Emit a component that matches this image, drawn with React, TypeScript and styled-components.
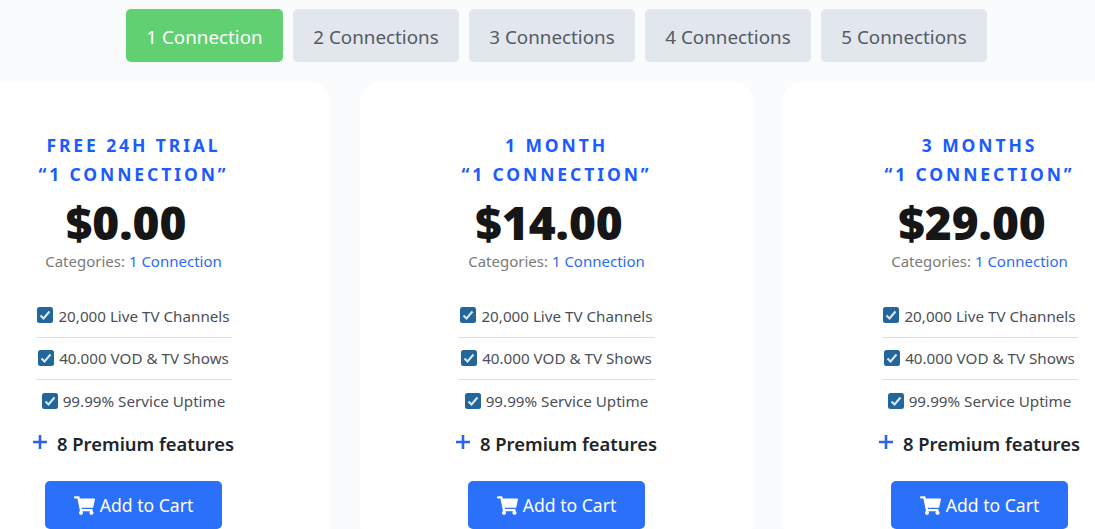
import React from 'react';
import styled, { createGlobalStyle } from 'styled-components';

const GlobalStyle = createGlobalStyle`
    html, body {
        margin: 0;
        padding: 0;
        height: 529px;
        overflow: hidden;
        background: #f9fbfd;
        font-family: "Noto Sans", "Open Sans", sans-serif;
    }
`;

const Page = styled.div`
    width: 1095px;
    height: 529px;
    overflow: hidden;
`;

const TabBar = styled.div`
    display: flex;
    justify-content: center;
    gap: 10px;
    height: 82px;
    padding: 9px 0 0 18px;
    box-sizing: border-box;
`;

const Tab = styled.div<{ $active?: boolean }>`
    display: flex;
    align-items: center;
    justify-content: center;
    height: 53px;
    width: ${props => (props.$active ? '157px' : '166px')};
    border-radius: 5px;
    font-size: 18.8px;
    padding-top: 2px;
    box-sizing: border-box;
    background: ${props => (props.$active ? '#60d071' : '#e1e7ed')};
    color: ${props => (props.$active ? '#ffffff' : '#555a64')};
`;

const CardRow = styled.div`
    display: flex;
    gap: 30px;
    margin-left: -63px;
`;

const Card = styled.div`
    flex: 0 0 393px;
    height: 460px;
    box-sizing: border-box;
    padding-top: 49px;
    background: #ffffff;
    border-radius: 20px;
    display: flex;
    flex-direction: column;
    align-items: center;
`;

const Title = styled.div`
    font-size: 17.5px;
    line-height: 29px;
    font-weight: 700;
    letter-spacing: 2.9px;
    color: #1a5cff;
    text-align: center;
`;

const Price = styled.div`
    font-size: 46px;
    line-height: 48px;
    margin-top: 9px;
    font-weight: 900;
    color: #161616;
    padding-right: 15px;
`;

const Categories = styled.div`
    font-size: 15px;
    line-height: 20px;
    color: #7a7a7a;
    margin-top: 5px;
`;

const CategoryLink = styled.span`
    color: #2b6cf6;
`;

const FeatureList = styled.div`
    width: 196px;
    margin-top: 24px;
`;

const Feature = styled.div`
    display: flex;
    align-items: center;
    justify-content: center;
    gap: 5px;
    height: 42.5px;
    box-sizing: border-box;
    font-size: 15.2px;
    white-space: nowrap;
    color: #4a4f58;
    border-bottom: 1px solid #dedfe1;

    &:last-child {
        border-bottom: none;
    }
`;

const CheckBox = styled.svg`
    flex: none;
    width: 16px;
    height: 16px;
    margin-top: -1px;
`;

const PremiumRow = styled.div`
    display: flex;
    align-items: center;
    gap: 10px;
    margin-top: 4.5px;
    height: 32px;
    font-size: 18.4px;
    font-weight: 600;
    white-space: nowrap;
    color: #212529;
`;

const PlusIcon = styled.svg`
    width: 14px;
    height: 14px;
    margin-top: -2px;
`;

const CartButton = styled.div`
    display: flex;
    align-items: center;
    justify-content: center;
    gap: 5px;
    width: 177px;
    height: 48px;
    margin-top: 22px;
    border-radius: 5px;
    background: #2b70fb;
    color: #ffffff;
    font-size: 17.6px;
`;

const CartIcon = styled.svg`
    width: 21px;
    height: 19px;
    fill: #ffffff;
`;

const tabs = ['1 Connection', '2 Connections', '3 Connections', '4 Connections', '5 Connections'];

const plans = [
    { title: 'FREE 24H TRIAL', price: '$0.00' },
    { title: '1 MONTH', price: '$14.00' },
    { title: '3 MONTHS', price: '$29.00' },
];

const features = ['20,000 Live TV Channels', '40.000 VOD & TV Shows', '99.99% Service Uptime'];

const App: React.FC = () => (
    <Page>
        <GlobalStyle />
        <TabBar>
            {tabs.map((tab, i) => (
                <Tab key={tab} $active={i === 0}>{tab}</Tab>
            ))}
        </TabBar>
        <CardRow>
            {plans.map(plan => (
                <Card key={plan.title}>
                    <Title>{plan.title}<br />“1 CONNECTION”</Title>
                    <Price>{plan.price}</Price>
                    <Categories>
                        Categories: <CategoryLink>1 Connection</CategoryLink>
                    </Categories>
                    <FeatureList>
                        {features.map(feature => (
                            <Feature key={feature}>
                                <CheckBox viewBox="0 0 16 16">
                                    <rect width="16" height="16" rx="2.5" fill="#22669c" />
                                    <path d="M3.5 8.5l3 3 6-7" fill="none" stroke="#dcebf7" strokeWidth="2" />
                                </CheckBox>
                                {feature}
                            </Feature>
                        ))}
                    </FeatureList>
                    <PremiumRow>
                        <PlusIcon viewBox="0 0 14 14">
                            <path d="M7 0v14M0 7h14" stroke="#2b63f0" strokeWidth="2.6" />
                        </PlusIcon>
                        8 Premium features
                    </PremiumRow>
                    <CartButton>
                        <CartIcon viewBox="0 0 576 512">
                            <path d="M528.12 301.32l47.27-208C578.8 78.31 567.4 64 552 64H159.21l-9.17-44.81C147.76 8 137.9 0 126.55 0H24C10.75 0 0 10.75 0 24v16c0 13.25 10.75 24 24 24h69.88l70.25 343.43C147.32 417.1 136 435.22 136 456c0 30.93 25.07 56 56 56s56-25.07 56-56c0-15.67-6.44-29.83-16.82-40h209.64C430.44 426.17 424 440.33 424 456c0 30.93 25.07 56 56 56s56-25.07 56-56c0-22.17-12.89-41.33-31.58-50.41l5.52-24.27c3.41-15.01-8-29.32-23.4-29.32H218.1l-6.55-32h293.15c11.2 0 20.9-7.75 23.42-18.68z" />
                        </CartIcon>
                        Add to Cart
                    </CartButton>
                </Card>
            ))}
        </CardRow>
    </Page>
);

export default App;
